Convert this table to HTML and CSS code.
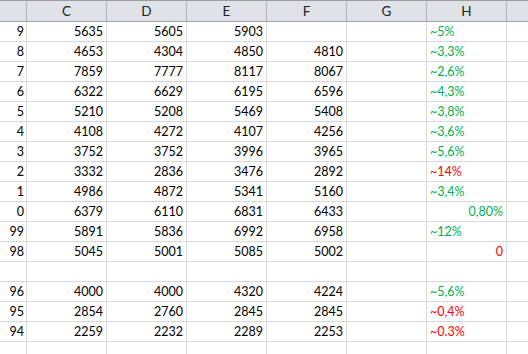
FILE: index.html
```html
<!DOCTYPE html>
<html>
<head>
<meta charset="utf-8">
<link rel="stylesheet" href="styles.css">
</head>
<body>
<div class="sheet">
  <div class="row head">
    <div class="rh"></div>
    <div class="c">C</div><div class="c">D</div><div class="c">E</div><div class="c">F</div><div class="c">G</div><div class="c">H</div>
    <div class="c last"></div>
  </div>
  <div class="row"><div class="rh">9</div><div class="c">5635</div><div class="c">5605</div><div class="c">5903</div><div class="c"></div><div class="c"></div><div class="c l g">~5%</div><div class="c last"></div></div>
  <div class="row"><div class="rh">8</div><div class="c">4653</div><div class="c">4304</div><div class="c">4850</div><div class="c">4810</div><div class="c"></div><div class="c l g">~3,3%</div><div class="c last"></div></div>
  <div class="row"><div class="rh">7</div><div class="c">7859</div><div class="c">7777</div><div class="c">8117</div><div class="c">8067</div><div class="c"></div><div class="c l g">~2,6%</div><div class="c last"></div></div>
  <div class="row"><div class="rh">6</div><div class="c">6322</div><div class="c">6629</div><div class="c">6195</div><div class="c">6596</div><div class="c"></div><div class="c l g">~4,3%</div><div class="c last"></div></div>
  <div class="row"><div class="rh">5</div><div class="c">5210</div><div class="c">5208</div><div class="c">5469</div><div class="c">5408</div><div class="c"></div><div class="c l g">~3,8%</div><div class="c last"></div></div>
  <div class="row"><div class="rh">4</div><div class="c">4108</div><div class="c">4272</div><div class="c">4107</div><div class="c">4256</div><div class="c"></div><div class="c l g">~3,6%</div><div class="c last"></div></div>
  <div class="row"><div class="rh">3</div><div class="c">3752</div><div class="c">3752</div><div class="c">3996</div><div class="c">3965</div><div class="c"></div><div class="c l g">~5,6%</div><div class="c last"></div></div>
  <div class="row"><div class="rh">2</div><div class="c">3332</div><div class="c">2836</div><div class="c">3476</div><div class="c">2892</div><div class="c"></div><div class="c l r">~14%</div><div class="c last"></div></div>
  <div class="row"><div class="rh">1</div><div class="c">4986</div><div class="c">4872</div><div class="c">5341</div><div class="c">5160</div><div class="c"></div><div class="c l g">~3,4%</div><div class="c last"></div></div>
  <div class="row"><div class="rh">0</div><div class="c">6379</div><div class="c">6110</div><div class="c">6831</div><div class="c">6433</div><div class="c"></div><div class="c g">0,80%</div><div class="c last"></div></div>
  <div class="row"><div class="rh">99</div><div class="c">5891</div><div class="c">5836</div><div class="c">6992</div><div class="c">6958</div><div class="c"></div><div class="c l g">~12%</div><div class="c last"></div></div>
  <div class="row"><div class="rh">98</div><div class="c">5045</div><div class="c">5001</div><div class="c">5085</div><div class="c">5002</div><div class="c"></div><div class="c r">0</div><div class="c last"></div></div>
  <div class="row"><div class="rh"></div><div class="c"></div><div class="c"></div><div class="c"></div><div class="c"></div><div class="c"></div><div class="c"></div><div class="c last"></div></div>
  <div class="row"><div class="rh">96</div><div class="c">4000</div><div class="c">4000</div><div class="c">4320</div><div class="c">4224</div><div class="c"></div><div class="c l g">~5,6%</div><div class="c last"></div></div>
  <div class="row"><div class="rh">95</div><div class="c">2854</div><div class="c">2760</div><div class="c">2845</div><div class="c">2845</div><div class="c"></div><div class="c l r">~0,4%</div><div class="c last"></div></div>
  <div class="row"><div class="rh">94</div><div class="c">2259</div><div class="c">2232</div><div class="c">2289</div><div class="c">2253</div><div class="c"></div><div class="c l r">~0.3%</div><div class="c last"></div></div>
  <div class="row"><div class="rh"></div><div class="c"></div><div class="c"></div><div class="c"></div><div class="c"></div><div class="c"></div><div class="c"></div><div class="c last"></div></div>
</div>
</body>
</html>
```
FILE: styles.css
```css
html, body {
  margin: 0;
  padding: 0;
  background: #ffffff;
  overflow: hidden;
}
.sheet {
  width: 528px;
  font-family: Lato, "Liberation Sans", sans-serif;
  font-size: 12.5px;
  color: #000000;
}
.row {
  display: flex;
  height: 20px;
  box-sizing: border-box;
  border-bottom: 1px solid #d9d9d9;
}
.row > div {
  box-sizing: border-box;
  height: 19px;
  line-height: 20px;
  white-space: nowrap;
  overflow: hidden;
}
.rh {
  width: 27px;
  flex: none;
  border-right: 1px solid #d9d9d9;
  text-align: right;
  padding-right: 2px;
}
.c {
  width: 80px;
  flex: none;
  border-right: 1px solid #d9d9d9;
  text-align: right;
  padding-right: 3px;
}
.c.last {
  flex: 1;
  border-right: none;
}
.c.l {
  text-align: left;
  padding-left: 3px;
}
.g { color: #00b050; }
.r { color: #ff0000; }

.head {
  height: 22px;
  background: #dfe3e8;
  border-top: 1px solid #9a9ea3;
  border-bottom: 1px solid #9fa3a8;
}
.head > div {
  height: 20px;
  line-height: 20px;
  text-align: center;
  padding: 0;
  font-size: 13.5px;
  color: #222222;
  border-right-color: #b4b8bd;
}
.head .rh { border-right-color: #b4b8bd; }
```
